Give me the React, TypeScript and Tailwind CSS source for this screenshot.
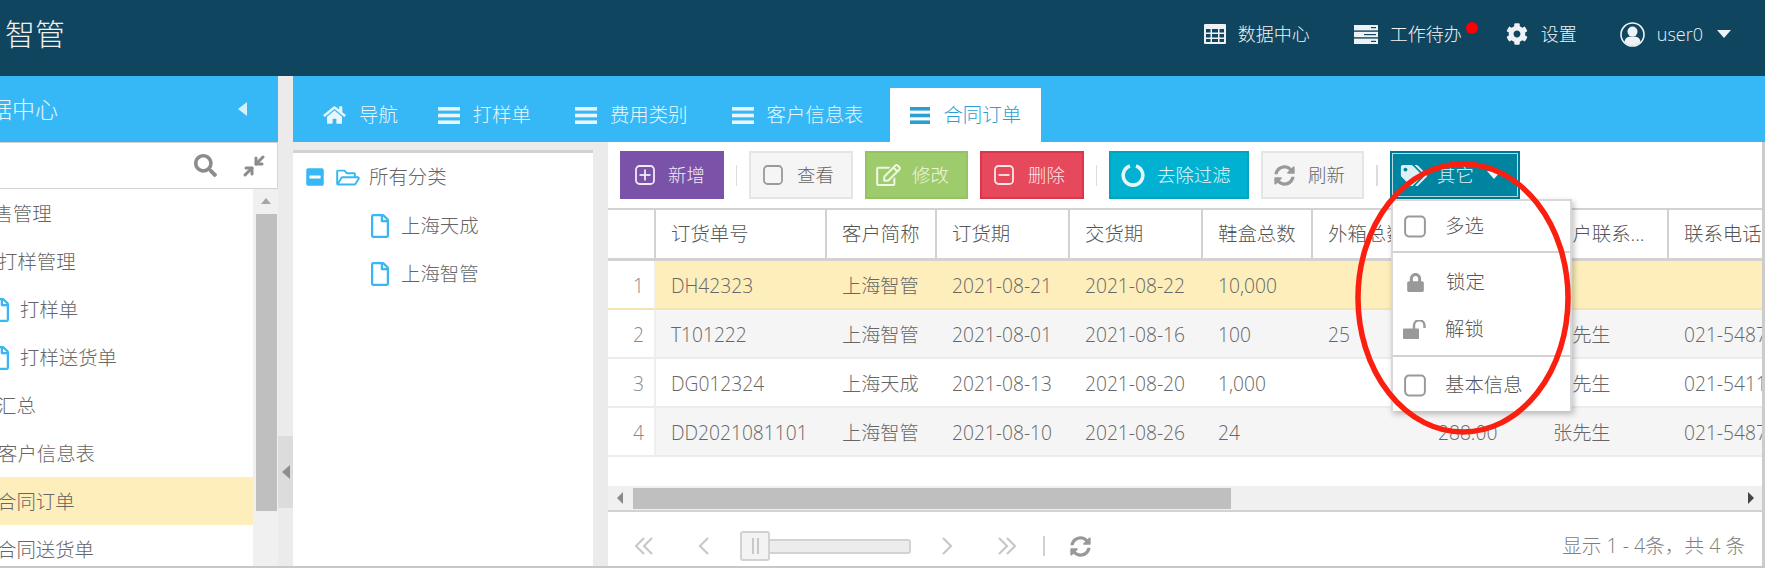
import type { ReactNode } from "react";
import { Minimize2 } from "lucide-react";
import {
  FaCog,
  FaHome,
  FaLock,
  FaMinusSquare,
  FaRegEdit,
  FaRegFile,
  FaRegFolderOpen,
  FaSearch,
  FaSyncAlt,
  FaTags,
} from "react-icons/fa";

function BarsIcon(props: { className?: string }) {
  return (
    <svg viewBox="0 0 22 17" className={props.className} fill="currentColor" preserveAspectRatio="none">
      <rect x="0" y="0" width="22" height="3.6" />
      <rect x="0" y="6.7" width="22" height="3.6" />
      <rect x="0" y="13.4" width="22" height="3.6" />
    </svg>
  );
}

function GridIcon() {
  return (
    <svg viewBox="0 0 22 20" className="h-[20px] w-[22px]" fill="#eef2f5">
      <path
        fillRule="evenodd"
        d="M1 0H21a1 1 0 0 1 1 1V19a1 1 0 0 1-1 1H1a1 1 0 0 1-1-1V1a1 1 0 0 1 1-1Z M2 5V8.5H6.5V5Z M8 5V8.5H14V5Z M15.5 5V8.5H20V5Z M2 10V13.5H6.5V10Z M8 10V13.5H14V10Z M15.5 10V13.5H20V10Z M2 15V18H6.5V15Z M8 15V18H14V15Z M15.5 15V18H20V15Z"
      />
    </svg>
  );
}

function BoxIcon(props: { mark?: "plus" | "minus"; className: string }) {
  return (
    <svg viewBox="0 0 20 20" className={props.className} fill="none" stroke="currentColor" strokeWidth="1.8">
      <rect x="1" y="1" width="18" height="18" rx="3.5" />
      {props.mark && <path d="M4.5 10H15.5" />}
      {props.mark === "plus" && <path d="M10 4.5V15.5" />}
    </svg>
  );
}

function ServerIcon() {
  return (
    <svg viewBox="0 0 24 19" className="h-[19px] w-[24px]" fill="#eef2f5">
      <rect x="0" y="0" width="24" height="5.4" />
      <rect x="0" y="6.8" width="24" height="5.4" />
      <rect x="0" y="13.6" width="24" height="5.4" />
      <rect x="17" y="2" width="5" height="1.2" fill="#10455f" />
      <rect x="10" y="9" width="12" height="1.2" fill="#10455f" />
      <rect x="17" y="15.8" width="5" height="1.2" fill="#10455f" />
    </svg>
  );
}

function UserIcon() {
  return (
    <svg viewBox="0 0 25 25" className="h-[25px] w-[25px]">
      <circle cx="12.5" cy="12.5" r="11.5" fill="none" stroke="#eef2f5" strokeWidth="1.6" />
      <circle cx="12.5" cy="9.6" r="5" fill="#eef2f5" />
      <path d="M4.5 20 C5 15.5 8 14.5 12.5 14.5 C17 14.5 20 15.5 20.5 20 C16 24.5 9 24.5 4.5 20 Z" fill="#eef2f5" />
    </svg>
  );
}

function NotchIcon() {
  return (
    <svg viewBox="0 0 24 24" className="h-[24px] w-[24px]" fill="none">
      <path d="M15 3 A9.8 9.8 0 1 1 9 3" stroke="#e6f5f8" strokeWidth="3.6" />
    </svg>
  );
}

function UnlockIcon() {
  return (
    <svg viewBox="0 0 23 19" className="h-[19px] w-[23px]" fill="#999999">
      <rect x="0" y="8.5" width="16" height="10.5" rx="1" />
      <path d="M11 9 V5.5 A5 5 0 0 1 21.5 5.5 V8" fill="none" stroke="#999999" strokeWidth="2.4" />
    </svg>
  );
}

function DoubleChevron(props: { dir: "left" | "right" }) {
  return (
    <svg viewBox="0 0 18 18" className="h-[18px] w-[18px]" fill="none" stroke="#c8c8c8" strokeWidth="2.2">
      {props.dir === "left" ? (
        <>
          <polyline points="9,1 1,9 9,17" />
          <polyline points="17,1 9,9 17,17" />
        </>
      ) : (
        <>
          <polyline points="1,1 9,9 1,17" />
          <polyline points="9,1 17,9 9,17" />
        </>
      )}
    </svg>
  );
}

function SingleChevron(props: { dir: "left" | "right" }) {
  return (
    <svg viewBox="0 0 12 18" className="h-[18px] w-[12px]" fill="none" stroke="#c8c8c8" strokeWidth="2.2">
      <polyline points={props.dir === "left" ? "10,1 2,9 10,17" : "2,1 10,9 2,17"} />
    </svg>
  );
}

function HeaderItem(props: { icon: ReactNode; label: string; className: string }) {
  return (
    <div className={`flex items-center ${props.className}`}>
      {props.icon}
      <span className="text-[18px] leading-none text-[#eef2f5]">{props.label}</span>
    </div>
  );
}

function Header() {
  return (
    <div className="flex h-[76px] shrink-0 items-center bg-[#10455f]">
      <div className="ml-[5px] -mt-[8px] text-[30px] leading-none text-[#f0f0f0]">智管</div>
      <div className="ml-auto -mt-[8px] flex items-center pr-[34px]">
        <HeaderItem icon={<GridIcon />} label="数据中心" className="gap-[12px]" />
        <HeaderItem icon={<ServerIcon />} label="工作待办" className="ml-[44px] gap-[12px]" />
        <span className="mb-[12px] ml-[4px] h-[12px] w-[12px] rounded-full bg-[#ff0000]" />
        <HeaderItem icon={<FaCog className="h-[22px] w-[22px] text-[#eef2f5]" />} label="设置" className="ml-[28px] gap-[13px]" />
        <div className="ml-[43px] flex items-center gap-[12px]">
          <UserIcon />
          <span className="text-[18px] leading-none text-[#eef2f5]">user0</span>
        </div>
        <span className="ml-[14px] h-0 w-0 border-x-[7.5px] border-t-[8px] border-x-transparent border-t-[#eef2f5]" />
      </div>
    </div>
  );
}

const navItems = [
  { label: "销售管理", className: "-ml-[26px]" },
  { label: "打样管理", className: "-ml-[2px]" },
  { label: "打样单", file: true },
  { label: "打样送货单", file: true },
  { label: "汇总", className: "-ml-[3px]" },
  { label: "客户信息表", className: "-ml-[2px]" },
  { label: "合同订单", className: "-ml-[3px]", active: true },
  { label: "合同送货单", className: "-ml-[3px]" },
];

function Sidebar() {
  return (
    <div className="flex w-[278px] shrink-0 flex-col overflow-hidden bg-white">
      <div className="flex h-[66px] shrink-0 items-center bg-[#36b8f6] pr-[31px]">
        <span className="-ml-[34px] text-[23px] leading-none text-[#eaf7fd]">数据中心</span>
        <span className="ml-auto h-0 w-0 border-y-[7.5px] border-r-[9px] border-y-transparent border-r-[#d7f0fb]" />
      </div>
      <div className="flex h-[47px] shrink-0 items-center border-y border-y-[#d2d2d2] border-r border-r-[#d8d8d8] pl-[194px] text-[#8c8c8c]">
        <FaSearch className="h-[23px] w-[23px]" />
        <Minimize2 className="ml-[25px] h-[24px] w-[24px]" strokeWidth={3} />
      </div>
      <div className="flex min-h-0 flex-1">
        <div className="min-w-0 flex-1 overflow-hidden">
          {navItems.map((item) => (
            <div
              key={item.label}
              className={`flex h-[48px] items-center whitespace-nowrap pt-[1px] text-[19.4px] text-[#666666] ${item.active ? "bg-[#fdeebb]" : ""}`}
            >
              {item.file && <FaRegFile className="-ml-[10px] mr-[10px] h-[24px] w-[20px] shrink-0 text-[#36b8f6]" />}
              <span className={item.className}>{item.label}</span>
            </div>
          ))}
        </div>
        <div className="flex w-[25px] shrink-0 flex-col items-center bg-[#f0f0f0] pl-[1px]">
          <span className="mt-[9px] h-0 w-0 border-x-[5.5px] border-b-[6px] border-x-transparent border-b-[#a6a6a6]" />
          <div className="mt-[10px] h-[297px] w-[21px] bg-[#bfbfbf]" />
        </div>
      </div>
    </div>
  );
}

function Gutter() {
  return (
    <div className="w-[15px] shrink-0 bg-[#ebebeb] pt-[360px]">
      <div className="flex h-[72px] items-center justify-center bg-[#dcdcdc]">
        <span className="h-0 w-0 border-y-[7px] border-r-[8px] border-y-transparent border-r-[#8f8f8f]" />
      </div>
    </div>
  );
}

const tabs = [
  { label: "打样单", className: "-ml-[4px]" },
  { label: "费用类别", className: "" },
  { label: "客户信息表", className: "" },
];

function TabBar() {
  return (
    <div className="flex h-[66px] shrink-0 items-end bg-[#36b8f6] pl-[8px] pr-[3px]">
      <div className="flex h-[54px] items-center gap-[13px] px-[22px] text-[#e8f6fd]">
        <FaHome className="h-[20px] w-[23px]" />
        <span className="text-[19.4px] leading-none">导航</span>
      </div>
      {tabs.map((tab) => (
        <div key={tab.label} className={`flex h-[54px] items-center gap-[13px] px-[22px] text-[#e8f6fd] ${tab.className}`}>
          <BarsIcon className="h-[17px] w-[22px]" />
          <span className="text-[19.4px] leading-none">{tab.label}</span>
        </div>
      ))}
      <div className="ml-[5px] flex h-[54px] w-[151px] items-center gap-[13px] bg-white pl-[20px] text-[#2b9fd3]">
        <BarsIcon className="h-[17px] w-[20px]" />
        <span className="text-[19.4px] leading-none">合同订单</span>
      </div>
    </div>
  );
}

function Tree() {
  return (
    <div className="mt-[8px] w-[300px] shrink-0 border-t-[3px] border-t-[#d2d2d2] bg-white pt-[11px]">
      <div className="flex h-[26px] items-center pl-[13px]">
        <FaMinusSquare className="h-[20px] w-[18px] text-[#36b8f6]" />
        <FaRegFolderOpen className="ml-[11px] h-[21px] w-[26px] text-[#36b8f6]" />
        <span className="ml-[8px] text-[19.4px] text-[#666666]">所有分类</span>
      </div>
      {["上海天成", "上海智管"].map((name) => (
        <div key={name} className="mt-[23px] flex h-[25px] items-center pl-[77px]">
          <FaRegFile className="h-[24px] w-[20px] text-[#36b8f6]" />
          <span className="ml-[11px] text-[19.4px] text-[#666666]">{name}</span>
        </div>
      ))}
    </div>
  );
}

function ToolButton(props: { className: string; icon: ReactNode; label: string; children?: ReactNode }) {
  return (
    <div className={`relative flex h-[48px] shrink-0 items-center border-2 text-[18.4px] leading-none ${props.className}`}>
      {props.icon}
      <span>{props.label}</span>
      {props.children}
    </div>
  );
}

function Toolbar() {
  return (
    <div className="flex h-[66px] shrink-0 items-center gap-[12px] pl-[12px]">
      <ToolButton
        className="w-[104px] gap-[13px] border-[#7a52a8] bg-[#7a52a8] pl-[13px] text-[#f0eaf6]"
        icon={<BoxIcon mark="plus" className="h-[20px] w-[20px]" />}
        label="新增"
      />
      <div className="h-[21px] w-px bg-[#dddddd]" />
      <ToolButton
        className="w-[104px] gap-[14px] border-[#e5e5e5] bg-[#f5f5f5] pl-[12px] text-[#666666]"
        icon={<BoxIcon className="h-[20px] w-[20px] text-[#999999]" />}
        label="查看"
      />
      <ToolButton
        className="w-[103px] gap-[11px] border-[#92c55e] bg-[#9ecb6b] pl-[9px] text-[#eef6e4]"
        icon={<FaRegEdit className="h-[22px] w-[25px]" />}
        label="修改"
      />
      <ToolButton
        className="w-[104px] gap-[14px] border-[#e0344a] bg-[#e6495b] pl-[12px] text-[#fbe6e8]"
        icon={<BoxIcon mark="minus" className="h-[20px] w-[20px]" />}
        label="删除"
      />
      <div className="h-[21px] w-px bg-[#dddddd]" />
      <ToolButton
        className="w-[140px] gap-[12px] border-[#00a3c2] bg-[#00b1d2] pl-[10px] text-[#e6f5f8]"
        icon={<NotchIcon />}
        label="去除过滤"
      />
      <ToolButton
        className="w-[103px] gap-[13px] border-[#e5e5e5] bg-[#f5f5f5] pl-[11px] text-[#666666]"
        icon={<FaSyncAlt className="h-[21px] w-[21px] text-[#999999]" />}
        label="刷新"
      />
      <div className="h-[21px] w-[2px] bg-[#dddddd]" />
      <ToolButton
        className="w-[130px] gap-[9px] border-[#007a94] bg-[#00849f] pl-[8px] text-[#dff0f4] outline outline-1 -outline-offset-3 outline-[#b5dbe3]"
        icon={<FaTags className="h-[21px] w-[28px]" />}
        label="其它"
      >
        <span className="ml-[4px] h-0 w-0 border-x-[7px] border-t-[8px] border-x-transparent border-t-[#eef7f9]" />
      </ToolButton>
    </div>
  );
}

const columns = [
  { label: "订货单号", width: "w-[171px]" },
  { label: "客户简称", width: "w-[110px]" },
  { label: "订货期", width: "w-[133px]" },
  { label: "交货期", width: "w-[133px]" },
  { label: "鞋盒总数", width: "w-[110px]" },
  { label: "外箱总数", width: "w-[110px]" },
  { label: "总金额", width: "w-[115px]" },
  { label: "客户联系...", width: "w-[131px]" },
  { label: "联系电话", width: "w-[120px]" },
];

const rows = [
  { no: 1, cells: ["DH42323", "上海智管", "2021-08-21", "2021-08-22", "10,000", "", "", "", ""], rowClass: "bg-[#fdeebb] border-b-[#f3e4b3]" },
  { no: 2, cells: ["T101222", "上海智管", "2021-08-01", "2021-08-16", "100", "25", "", "张先生", "021-54871234"], rowClass: "bg-[#f5f5f5] border-b-[#ececec]" },
  { no: 3, cells: ["DG012324", "上海天成", "2021-08-13", "2021-08-20", "1,000", "", "", "李先生", "021-54112233"], rowClass: "bg-white border-b-[#ececec]" },
  { no: 4, cells: ["DD2021081101", "上海智管", "2021-08-10", "2021-08-26", "24", "", "288.00", "张先生", "021-54871234"], rowClass: "bg-[#f5f5f5] border-b-[#ececec]" },
];

function DataTable() {
  return (
    <div className="min-h-0 flex-1 overflow-hidden">
      <div className="flex h-[53px] w-[1200px] border-y-2 border-b-[3px] border-y-[#d2d2d2] bg-white text-[19.4px] text-[#555555]">
        <div className="w-[48px] shrink-0 border-r-2 border-r-[#d2d2d2]" />
        {columns.map((col) => (
          <div key={col.label} className={`flex shrink-0 items-center whitespace-nowrap border-r-2 border-r-[#d2d2d2] pl-[15px] ${col.width}`}>
            {col.label}
          </div>
        ))}
      </div>
      {rows.map((row) => (
        <div key={row.no} className="flex h-[49px] w-[1200px] text-[19.2px] text-[#666666]">
          <div className={`flex w-[48px] shrink-0 items-center justify-end border-r-2 border-b-2 border-r-[#eeeeee] bg-white pr-[10px] pt-[3px] text-[#888888] ${row.no === 1 ? "border-b-[#f3e4b3]" : "border-b-[#ececec]"}`}>
            {row.no}
          </div>
          <div className={`flex flex-1 border-b-2 ${row.rowClass}`}>
            {row.cells.map((cell, i) => (
              <div key={i} className={`flex shrink-0 items-center whitespace-nowrap pl-[15px] pt-[3px] ${columns[i].width}`}>
                {cell}
              </div>
            ))}
          </div>
        </div>
      ))}
    </div>
  );
}

function HScrollbar() {
  return (
    <div className="flex h-[26px] shrink-0 items-center border-b-2 border-b-[#d2d2d2] bg-[#f0f0f0]">
      <span className="ml-[9px] h-0 w-0 border-y-[6px] border-r-[6px] border-y-transparent border-r-[#8a8a8a]" />
      <div className="ml-[10px] h-[21px] w-[598px] bg-[#bfbfbf]" />
      <span className="ml-auto mr-[8px] h-0 w-0 border-y-[6px] border-l-[6px] border-y-transparent border-l-[#444444]" />
    </div>
  );
}

function Pager() {
  return (
    <div className="flex h-[54px] shrink-0 items-center pl-[27px] pr-[17px] pt-[14px]">
      <DoubleChevron dir="left" />
      <div className="ml-[45px]">
        <SingleChevron dir="left" />
      </div>
      <div className="ml-[30px] flex items-center">
        <div className="flex h-[30px] w-[30px] items-center justify-center gap-[3px] rounded-[3px] border-2 border-[#d2d2d2] bg-[#f3f3f3]">
          <span className="h-[16px] w-[2px] bg-[#c8c8c8]" />
          <span className="h-[16px] w-[2px] bg-[#c8c8c8]" />
        </div>
        <div className="h-[15px] w-[141px] rounded-r-[3px] border-2 border-l-0 border-[#d2d2d2] bg-[#ececec]" />
      </div>
      <div className="ml-[30px]">
        <SingleChevron dir="right" />
      </div>
      <div className="ml-[45px]">
        <DoubleChevron dir="right" />
      </div>
      <div className="ml-[27px] h-[20px] w-[2px] bg-[#d2d2d2]" />
      <FaSyncAlt className="ml-[25px] h-[21px] w-[21px] text-[#999999]" />
      <span className="ml-auto whitespace-nowrap text-[19.6px] leading-none text-[#808080]">显示 1 - 4条，共 4 条</span>
    </div>
  );
}

function DropdownMenu() {
  return (
    <div className="absolute left-[1391px] top-[199px] flex h-[212px] w-[181px] flex-col border-2 border-b-0 border-[#d8d8d8] bg-white text-[19.4px] text-[#555555] shadow-[2px_3px_6px_rgba(0,0,0,0.25)]">
      <div className="flex h-[52px] shrink-0 items-center gap-[19px] border-b-2 border-b-[#d2d2d2] pl-[11px]">
        <BoxIcon className="h-[23px] w-[22px] text-[#999999]" />
        多选
      </div>
      <div className="flex h-[50px] shrink-0 items-center gap-[22px] pl-[14px] pt-[8px]">
        <FaLock className="h-[19px] w-[17px] text-[#999999]" />
        锁定
      </div>
      <div className="flex h-[54px] shrink-0 items-center gap-[19px] border-b-2 border-b-[#d2d2d2] pl-[10px]">
        <UnlockIcon />
        解锁
      </div>
      <div className="flex h-[52px] shrink-0 items-center gap-[19px] pl-[11px] pt-[4px]">
        <BoxIcon className="h-[23px] w-[22px] text-[#999999]" />
        基本信息
      </div>
    </div>
  );
}

function RedCircle() {
  return (
    <svg className="absolute left-[1350px] top-[158px] h-[280px] w-[226px]" viewBox="0 0 226 280" fill="none">
      <ellipse cx="113" cy="140" rx="105" ry="134" stroke="#fa1f0f" strokeWidth="5.5" />
    </svg>
  );
}

export default function App() {
  return (
    <div className="relative flex h-[568px] w-[1765px] flex-col overflow-hidden border-b-2 border-b-[#c8c8c8] bg-[#ebebeb] font-['Open_Sans','Noto_Sans_CJK_SC',sans-serif] font-light">
      <Header />
      <div className="flex min-h-0 flex-1">
        <Sidebar />
        <Gutter />
        <div className="flex min-w-0 flex-1 flex-col">
          <TabBar />
          <div className="flex min-h-0 flex-1">
            <Tree />
            <div className="w-[15px] shrink-0" />
            <div className="flex min-w-0 flex-1 flex-col border-r-[3px] border-r-[#cccccc] bg-white">
              <Toolbar />
              <DataTable />
              <HScrollbar />
              <Pager />
            </div>
          </div>
        </div>
      </div>
      <DropdownMenu />
      <RedCircle />
    </div>
  );
}
